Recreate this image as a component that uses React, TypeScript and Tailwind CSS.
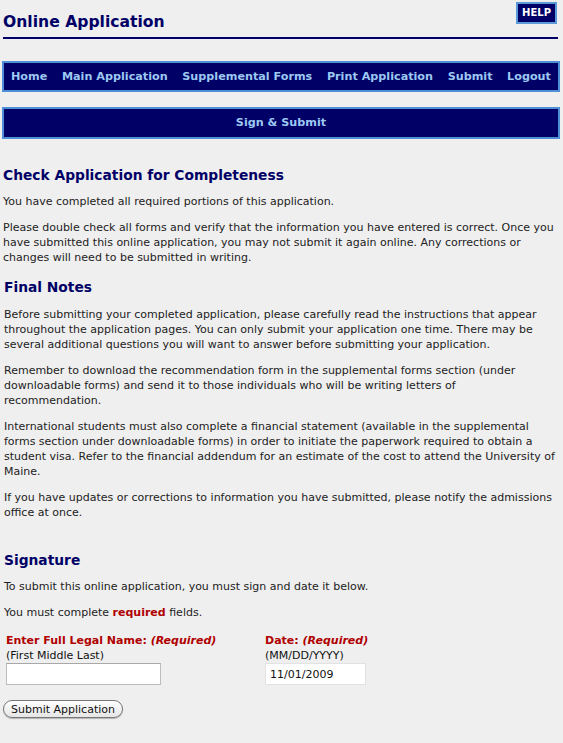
import React from 'react'

const NAV_LINKS = ['Home', 'Main Application', 'Supplemental Forms', 'Print Application', 'Submit', 'Logout']

const App = () => {
  return (
    <div className="min-h-[743px] bg-[#efefef] px-[3px] text-[11px] leading-[15px] text-[#222] font-['DejaVu_Sans',Verdana,sans-serif]">
      <div className="flex items-start justify-between">
        <h1 className="mt-[12px] text-[15.6px] font-bold leading-[20px] text-[#000066]">Online Application</h1>
        <div className="mt-[2px] mr-[3px] border-2 border-[#5a9ad8] bg-[#000066] px-[4px] py-[3px] text-[10px] font-bold leading-[12px] text-white">
          HELP
        </div>
      </div>
      <div className="mt-[5px] mr-[2px] h-[2px] bg-[#000066]" />

      <div className="mt-[22px] -ml-[1px] flex items-center justify-between whitespace-nowrap border-2 border-[#4f8fd6] bg-[#000066] px-[7px] py-[6px] text-[11.2px] font-bold leading-[15px] text-[#9cc8f2]">
        {NAV_LINKS.map((link) => (
          <span key={link}>{link}</span>
        ))}
      </div>

      <div className="mt-[15px] -ml-[1px] border-2 border-[#4f8fd6] bg-[#000066] pt-[6px] pb-[7px] text-center text-[11.2px] font-bold leading-[15px] text-[#9cc8f2]">
        Sign &amp; Submit
      </div>

      <h2 className="mt-[27px] text-[13.8px] font-bold leading-[18px] text-[#000066]">Check Application for Completeness</h2>
      <p className="mt-[10px]">You have completed all required portions of this application.</p>
      <p className="mt-[11px]">
        Please double check all forms and verify that the information you have entered is correct. Once you have submitted this online application, you may not submit it again online. Any corrections or changes will need to be submitted in writing.
      </p>

      <div className="px-[1px]">
        <h2 className="mt-[13px] text-[13.8px] font-bold leading-[18px] text-[#000066]">Final Notes</h2>
        <p className="mt-[11px]">
          Before submitting your completed application, please carefully read the instructions that appear throughout the application pages. You can only submit your application one time. There may be several additional questions you will want to answer before submitting your application.
        </p>
        <p className="mt-[11px]">
          Remember to download the recommendation form in the supplemental forms section (under downloadable forms) and send it to those individuals who will be writing letters of
          <br />
          recommendation.
        </p>
        <p className="mt-[11px]">
          International students must also complete a financial statement (available in the supplemental forms section under downloadable forms) in order to initiate the paperwork required to obtain a student visa. Refer to the financial addendum for an estimate of the cost to attend the University of Maine.
        </p>
        <p className="mt-[11px]">
          If you have updates or corrections to information you have submitted, please notify the admissions office at once.
        </p>

        <h2 className="mt-[31px] text-[13.8px] font-bold leading-[18px] text-[#000066]">Signature</h2>
        <p className="mt-[10px]">To submit this online application, you must sign and date it below.</p>
        <p className="mt-[11px]">
          You must complete <b className="text-[#b00000]">required</b> fields.
        </p>

        <div className="mt-[13px] flex pl-[2px] text-[#111]">
          <div className="w-[259px]">
            <div className="font-bold text-[#b00000]">
              Enter Full Legal Name: <i>(Required)</i>
            </div>
            <div>(First Middle Last)</div>
            <input
              type="text"
              className="block h-[22px] w-[155px] border border-[#bdbdbd] border-t-[#a8a8a8] bg-white px-[3px] text-[11px] outline-none"
            />
          </div>
          <div>
            <div className="font-bold text-[#b00000]">
              Date: <i>(Required)</i>
            </div>
            <div>(MM/DD/YYYY)</div>
            <input
              type="text"
              defaultValue="11/01/2009"
              className="block h-[22px] w-[101px] border border-[#e2e2e2] bg-white px-[4px] text-[11px] text-[#111] outline-none"
            />
          </div>
        </div>
      </div>

      <button className="mt-[15px] block h-[18px] rounded-full border border-[#777] bg-gradient-to-b from-white to-[#e6e6e6] px-[7px] text-[11px] leading-[15px] text-[#111] shadow-[0_1px_1px_rgba(0,0,0,0.25)]">
        Submit Application
      </button>
    </div>
  )
}

export default App
